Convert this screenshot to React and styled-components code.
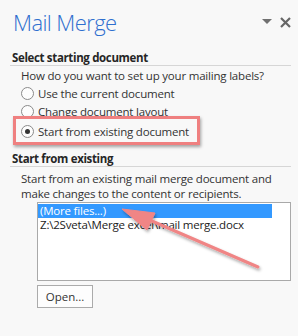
import React from 'react'
import styled, { createGlobalStyle } from 'styled-components'

const GlobalStyle = createGlobalStyle`
  html, body {
    margin: 0;
    padding: 0;
    background: #f8f8f8;
  }
  body {
    font-family: "Open Sans", "Noto Sans", sans-serif;
    color: #333;
    width: 298px;
    height: 336px;
    overflow: hidden;
  }
`

const Pane = styled.div`
  position: relative;
  width: 298px;
  height: 336px;
  box-sizing: border-box;
  padding: 0 7px 0 10px;
  background: #f8f8f8;
`

const Header = styled.div`
  display: flex;
  align-items: center;
  height: 44px;
  padding-left: 3px;
`

const Title = styled.div`
  flex: 1;
  font-size: 22px;
  font-weight: 300;
  color: #2f6fcf;
  letter-spacing: -0.6px;
  line-height: 44px;
`

const HeaderTools = styled.div`
  display: flex;
  align-items: center;
  gap: 8px;
`

const SectionTitle = styled.div`
  margin-top: ${p => p.$top}px;
  padding-left: 2px;
  font-size: 11.5px;
  font-weight: 700;
  letter-spacing: -0.35px;
  line-height: 15px;
  color: #262626;
  border-bottom: 1px solid #d6d6d6;
`

const Text = styled.div`
  margin-top: ${p => p.$top || 0}px;
  padding-left: 11px;
  font-size: 11.5px;
  letter-spacing: -0.2px;
  line-height: 15px;
  white-space: nowrap;
  color: #333;
`

const RadioRow = styled.label`
  position: relative;
  display: flex;
  align-items: center;
  gap: 4px;
  height: 18px;
  margin-top: ${p => p.$top || 0}px;
  padding-left: 11px;
  font-size: 11.5px;
  letter-spacing: -0.2px;
  color: #333;
`

const RadioDot = styled.span`
  width: 11px;
  height: 11px;
  border-radius: 50%;
  border: 1px solid #8a8a8a;
  background: #fdfdfd;
  display: flex;
  align-items: center;
  justify-content: center;
  flex: none;

  &::after {
    content: '';
    display: ${p => (p.$checked ? 'block' : 'none')};
    width: 5px;
    height: 5px;
    border-radius: 50%;
    background: #333;
  }
`

const Highlight = styled.span`
  position: absolute;
  left: 3px;
  top: -6px;
  width: 187px;
  height: 29px;
  box-sizing: border-box;
  border: 3px solid #ef8080;
  box-shadow: 1px 2px 3px rgba(0, 0, 0, 0.35);
  pointer-events: none;
`

const ListBox = styled.div`
  margin: 1px 0 0 27px;
  height: 79px;
  box-sizing: border-box;
  border: 1px solid #a9a9a9;
  background: #fff;
  padding: 1px 18px 0 0;
`

const ListItem = styled.div`
  height: 14px;
  line-height: 13px;
  padding-left: 2px;
  font-size: 11.5px;
  letter-spacing: -0.2px;
  white-space: nowrap;
  color: ${p => (p.$selected ? '#fff' : '#222')};
  background: ${p => (p.$selected ? '#3399ff' : 'transparent')};
`

const Button = styled.button`
  display: block;
  margin: 4px 0 0 27px;
  width: 56px;
  height: 23px;
  box-sizing: border-box;
  border: 1px solid #ababab;
  background: #fdfdfd;
  font-family: inherit;
  font-size: 11.5px;
  color: #333;
  padding: 0;
`

const Arrow = styled.svg`
  position: absolute;
  left: 0;
  top: 0;
  pointer-events: none;
`

export default function App() {
  return (
    <Pane>
      <GlobalStyle />
      <Header>
        <Title>Mail Merge</Title>
        <HeaderTools>
          <svg width="10" height="6" viewBox="0 0 10 6">
            <path d="M0 0 L10 0 L5 5 Z" fill="#707070" />
          </svg>
          <svg width="11" height="11" viewBox="0 0 11 11">
            <path d="M1 1 L10 10 M10 1 L1 10" stroke="#666" strokeWidth="2.2" />
          </svg>
        </HeaderTools>
      </Header>

      <SectionTitle $top={6}>Select starting document</SectionTitle>
      <Text $top={2}>How do you want to set up your mailing labels?</Text>
      <RadioRow $top={1}>
        <RadioDot />
        Use the current document
      </RadioRow>
      <RadioRow>
        <RadioDot />
        Change document layout
      </RadioRow>
      <RadioRow $top={2}>
        <RadioDot $checked />
        Start from existing document
        <Highlight />
      </RadioRow>

      <SectionTitle $top={11}>Start from existing</SectionTitle>
      <Text $top={4}>
        Start from an existing mail merge document and
        <br />
        make changes to the content or recipients.
      </Text>
      <ListBox>
        <ListItem $selected>(More files...)</ListItem>
        <ListItem>Z:\2Sveta\Merge excel\mail merge.docx</ListItem>
      </ListBox>
      <Button>Open...</Button>

      <Arrow width="298" height="336" viewBox="0 0 298 336">
        <defs>
          <filter id="shadow" x="-10%" y="-10%" width="130%" height="140%">
            <feDropShadow dx="1" dy="2" stdDeviation="1.5" floodColor="#000" floodOpacity="0.35" />
          </filter>
        </defs>
        <g filter="url(#shadow)" fill="#f08585" stroke="#f08585">
          <line x1="258" y1="267" x2="145" y2="218" strokeWidth="3" strokeLinecap="round" />
          <path d="M122 209 L155 213 L147 230 Z" strokeWidth="1" strokeLinejoin="round" />
        </g>
      </Arrow>
    </Pane>
  )
}
